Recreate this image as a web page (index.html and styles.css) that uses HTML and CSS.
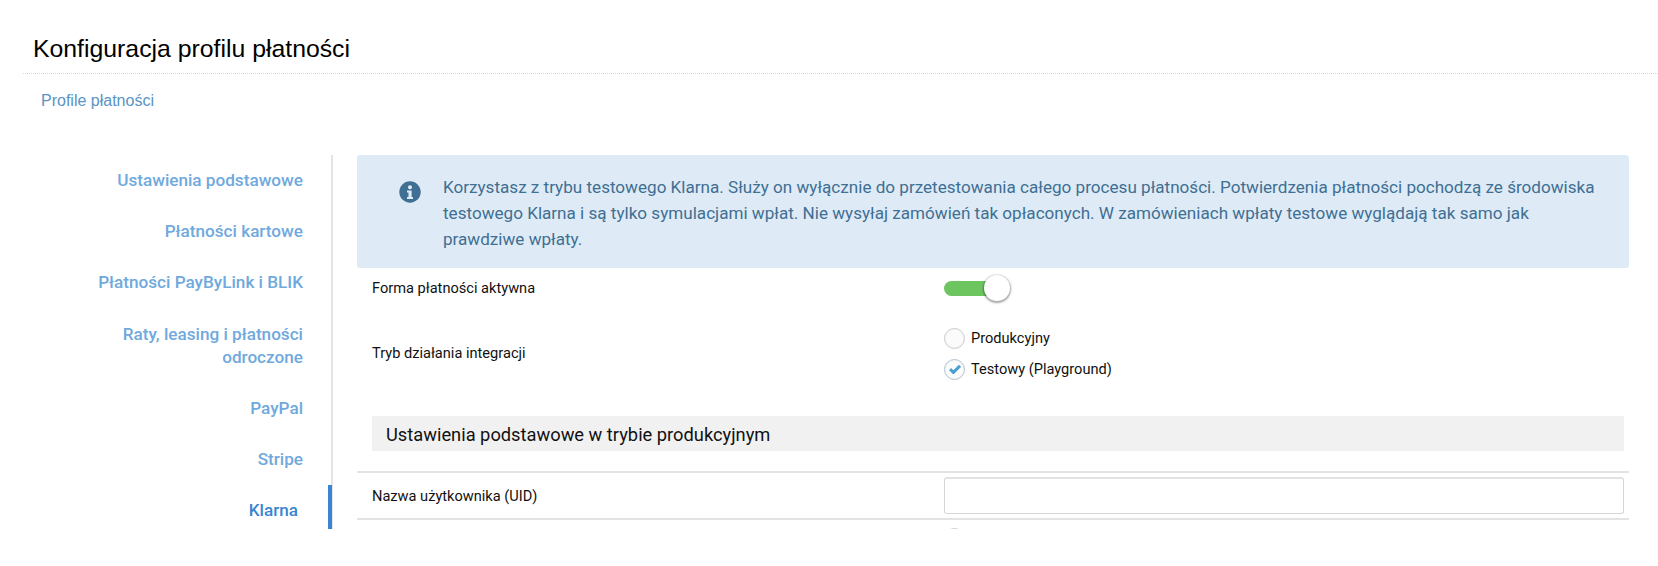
FILE: index.html
```html
<!DOCTYPE html>
<html lang="pl">
<head>
<meta charset="utf-8">
<title>Konfiguracja profilu płatności</title>
<link rel="stylesheet" href="styles.css">
</head>
<body>
<header class="page-head">
  <h1 class="page-title">Konfiguracja profilu płatności</h1>
</header>
<nav class="crumbs"><a href="#" class="crumb">Profile płatności</a></nav>
<div class="layout">
  <ul class="side">
    <li class="side-item"><a href="#">Ustawienia podstawowe</a></li>
    <li class="side-item"><a href="#">Płatności kartowe</a></li>
    <li class="side-item"><a href="#">Płatności PayByLink i BLIK</a></li>
    <li class="side-item"><a href="#">Raty, leasing i płatności odroczone</a></li>
    <li class="side-item"><a href="#">PayPal</a></li>
    <li class="side-item"><a href="#">Stripe</a></li>
    <li class="side-item active"><a href="#">Klarna</a></li>
  </ul>
  <main class="content">
    <div class="alert">
      <svg class="alert-icon" viewBox="0 0 22 22" aria-hidden="true">
        <circle cx="11" cy="11" r="10.7" fill="#3f6f92"/>
        <circle cx="11" cy="6.2" r="2" fill="#dfecf7"/>
        <path d="M8 9.4h4.6v6.5H14v2.2H8v-2.2h1.5v-4.3H8z" fill="#dfecf7"/>
      </svg>
      <p class="alert-text">Korzystasz z trybu testowego Klarna. Służy on wyłącznie do przetestowania całego procesu płatności. Potwierdzenia płatności pochodzą ze środowiska testowego Klarna i są tylko symulacjami wpłat. Nie wysyłaj zamówień tak opłaconych. W zamówieniach wpłaty testowe wyglądają tak samo jak prawdziwe wpłaty.</p>
    </div>
    <div class="row row-toggle">
      <div class="label">Forma płatności aktywna</div>
      <div class="field"><span class="switch"><span class="knob"></span></span></div>
    </div>
    <div class="row row-radios">
      <div class="label">Tryb działania integracji</div>
      <div class="field radios">
        <div class="radio-line"><span class="radio"></span><span>Produkcyjny</span></div>
        <div class="radio-line"><span class="radio checked">
          <svg class="tick" viewBox="0 0 12 10" aria-hidden="true"><path d="M1 5.2l3.4 3.2L11 1.8" fill="none" stroke="#4a9fd0" stroke-width="3"/></svg>
        </span><span>Testowy (Playground)</span></div>
      </div>
    </div>
    <h2 class="section-title">Ustawienia podstawowe w trybie produkcyjnym</h2>
    <div class="row row-input">
      <div class="label">Nazwa użytkownika (UID)</div>
      <div class="field"><input class="text-input" type="text"></div>
    </div>
    <div class="row row-last">
      <div class="label"></div>
      <div class="field"><span class="radio"></span></div>
    </div>
  </main>
</div>
</body>
</html>
```
FILE: styles.css
```css
* { box-sizing: border-box; }
html, body { margin: 0; padding: 0; background: #fff; }
body { height: 566px; overflow: hidden; font-family: "Roboto", "Liberation Sans", sans-serif; color: #111; }

.page-head { margin-left: 23px; padding: 33px 0 0 10px; height: 74px; border-bottom: 1px dotted #d8d8d8; }
.page-title { margin: 0; font: 400 24.8px/32px "Liberation Sans", Arial, sans-serif; color: #000; }

.crumbs { padding: 16px 0 0 41px; height: 81px; }
.crumb { font: 400 16px/21px "Liberation Sans", Arial, sans-serif; color: #5a93c4; text-decoration: none; }

.layout { display: flex; height: 374px; overflow: hidden; }

.side { list-style: none; margin: 0; padding: 0; width: 333px; flex: none; border-right: 2px solid #e4e4e4; }
.side-item { padding: 14.1px 28px 14.1px 60px; text-align: right; font-size: 17.15px; font-weight: 500; line-height: 23px; }
.side-item a { color: #6fa9dd; text-decoration: none; }
.side-item.active { border-right: 4px solid #3a85d0; margin-right: -1px; padding-right: 30px; padding-top: 14px; }
.side-item.active a { color: #3a85d0; }

.content { margin-left: 24px; width: 1272px; }

.alert { display: flex; height: 113px; padding: 19px 30px 0 42px; background: #deebf7; border-radius: 3px; }
.alert-icon { width: 22px; height: 22px; flex: none; margin: 7px 22px 0 0; }
.alert-text { margin: 0; font-size: 17.1px; line-height: 26px; color: #3f6f92; }

.row { display: grid; grid-template-columns: 572px 1fr; padding: 0 5px 0 15px; align-items: center; font-size: 14.6px; }
.label { color: #111; }
.row-toggle { height: 40px; }
.row-radios { height: 86px; padding-top: 5px; }
.row-radios .label { margin-top: -2px; }
.row-input { height: 49px; margin-top: 20px; border-top: 2px solid #e3e3e3; border-bottom: 2px solid #e3e3e3; }
.row-last { height: 30px; align-items: start; padding-top: 8px; }

.switch { display: block; position: relative; width: 56px; height: 15px; border-radius: 8px; background: #6cc55f; }
.knob { position: absolute; right: -10px; top: -6px; width: 26px; height: 26px; border-radius: 50%; background: #fff; box-shadow: 0 1px 2px 1px rgba(0,0,0,.35); }

.radios { display: flex; flex-direction: column; gap: 9px; }
.radio-line { display: flex; align-items: center; gap: 6px; height: 22px; }
.radio { display: flex; align-items: center; justify-content: center; width: 21px; height: 21px; border-radius: 50%; border: 1.5px solid #c9ccd0; background: #fbfbfb; box-shadow: inset 0 0 1px #ddd; }
.radio.checked { border-color: #b4c4d2; }
.tick { width: 12px; height: 10px; }

.section-title { margin: 0 5px 0 15px; height: 35px; padding-left: 14px; background: #f1f1f1; font-size: 18.3px; font-weight: 400; line-height: 37px; color: #111; }
.row-radios + .section-title { margin-top: 22px; }

.text-input { display: block; width: 100%; height: 37px; border: 1px solid #d6d6d6; border-top: 2px solid #e2e2e2; border-radius: 3px; background: #fff; outline: none; }
```
